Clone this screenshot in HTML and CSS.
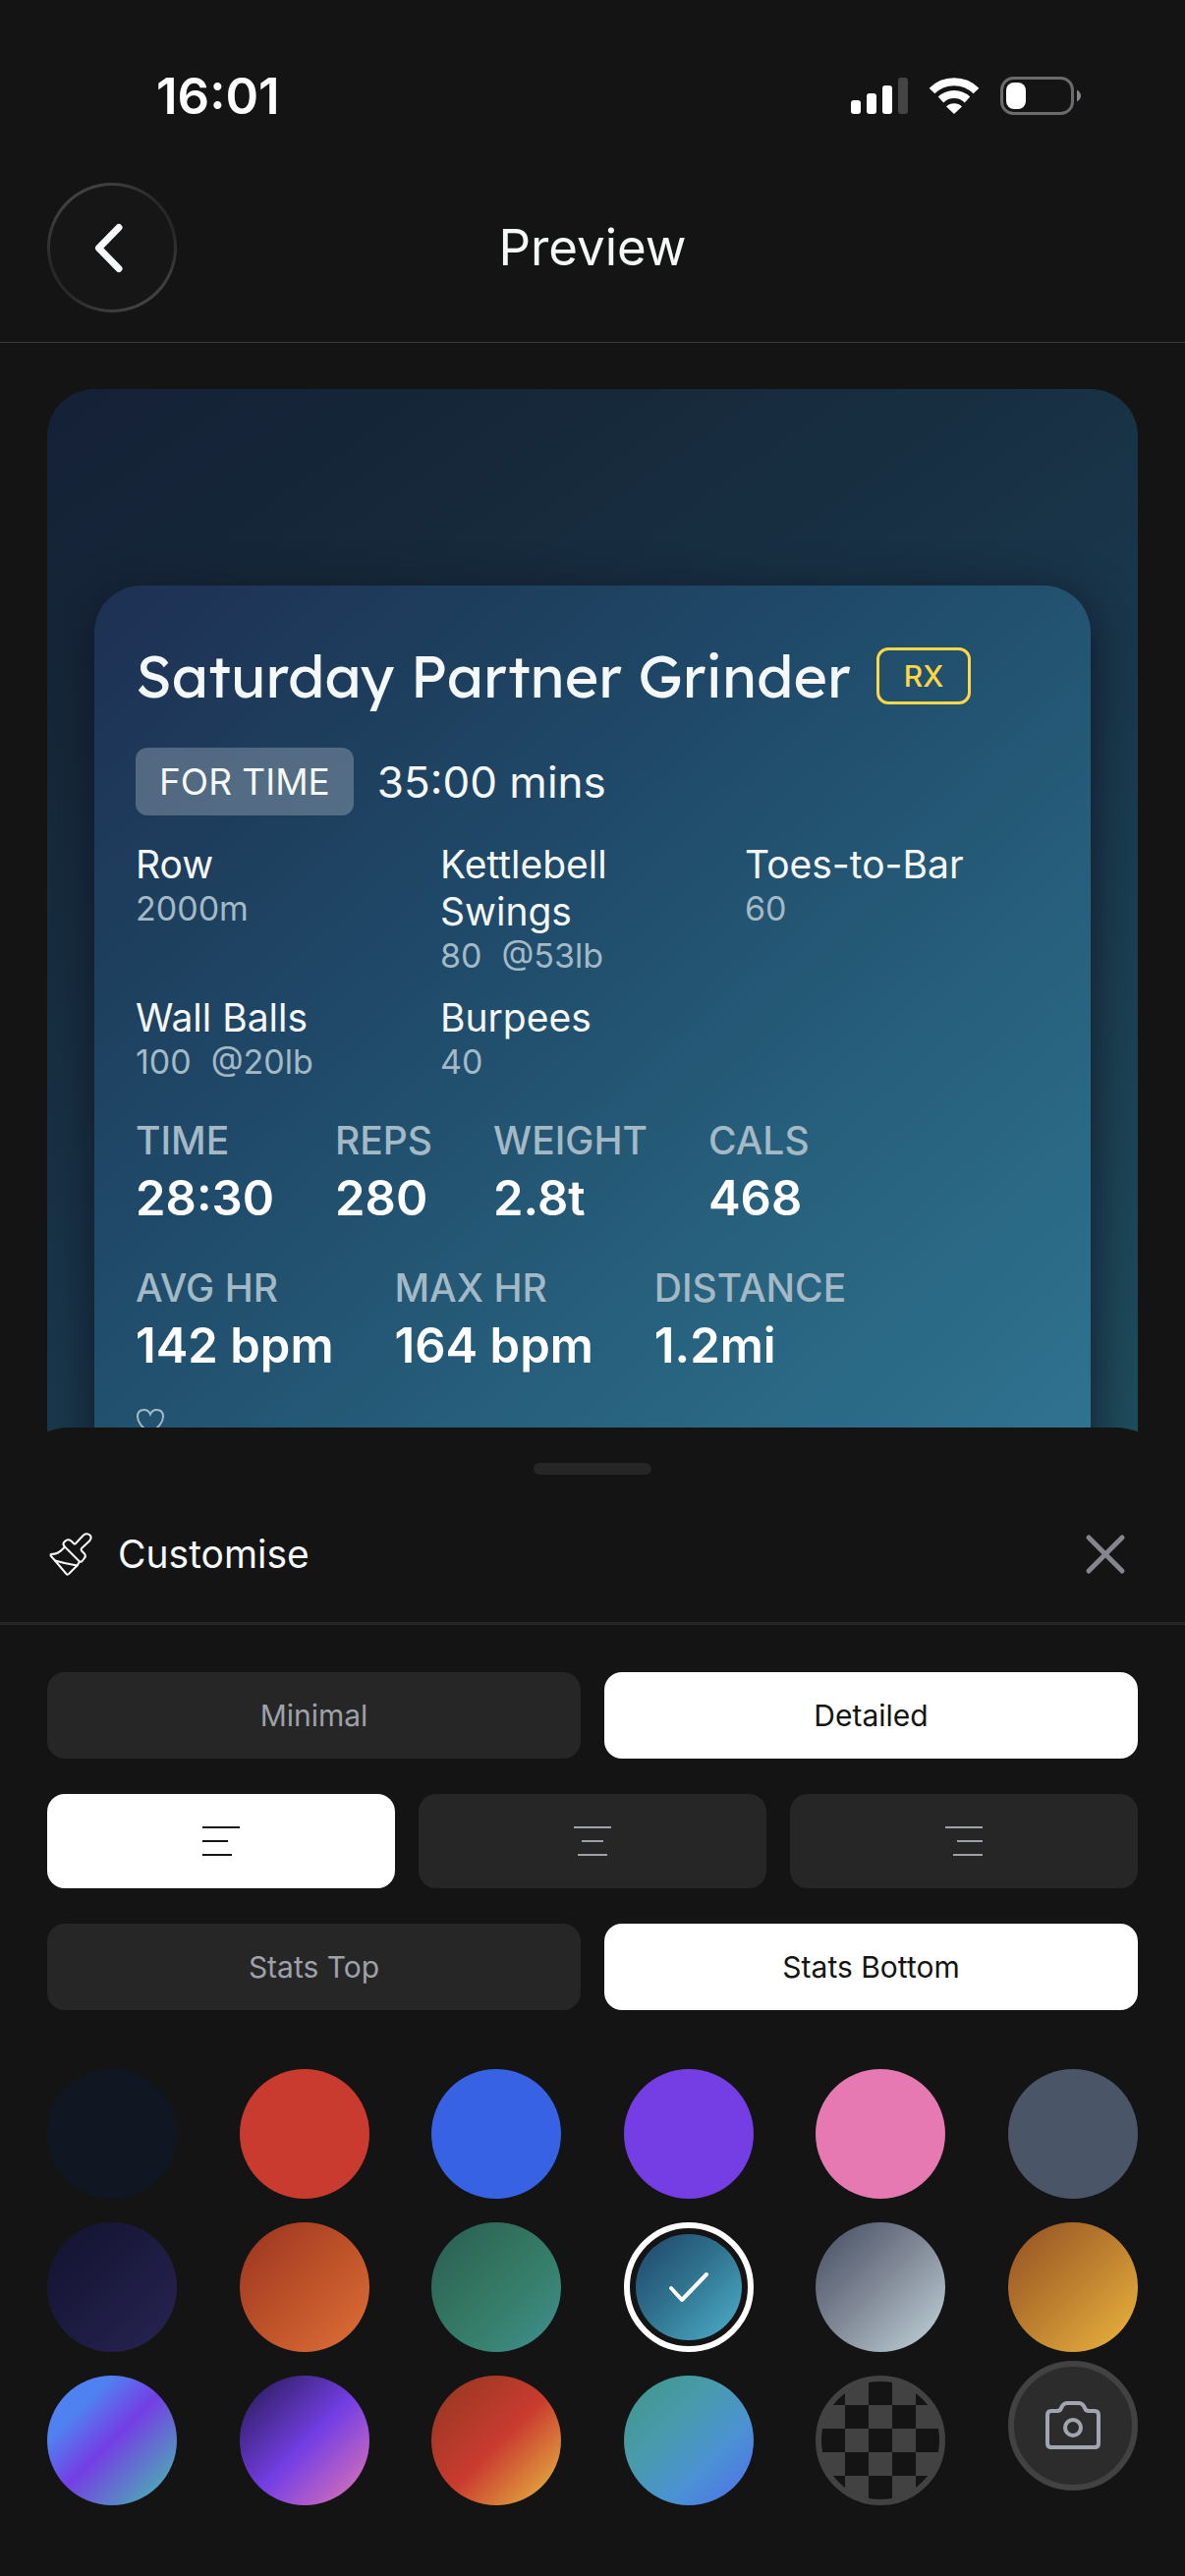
FILE: index.html
```html
<!DOCTYPE html>
<html lang="en">
<head>
    <meta charset="UTF-8">
    <meta name="viewport" content="width=device-width, initial-scale=1">
    <title>Preview</title>
    <link rel="stylesheet" href="styles.css">
</head>
<body>
    <div class="status-bar">
        <span class="clock">16:01</span>
        <div class="status-icons">
            <svg width="58" height="40" viewBox="0 0 58 40" fill="#fff">
                <rect x="0" y="24" width="10" height="14" rx="3"/>
                <rect x="16" y="17" width="10" height="21" rx="3"/>
                <rect x="32" y="9" width="10" height="29" rx="3"/>
                <rect x="48" y="1" width="10" height="37" rx="3" fill="#444"/>
            </svg>
            <svg width="52" height="40" viewBox="0 0 52 40" fill="none" stroke="#fff" stroke-width="8">
                <path d="M3.500 14.500 A32 32 0 0 1 48.500 14.500"/>
                <path d="M12.500 23.500 A19.500 19.500 0 0 1 39.500 23.500"/>
                <path d="M26 38 L18 30.500 A11.500 11.500 0 0 1 34 30.500 Z" fill="#fff" stroke="none"/>
            </svg>
            <svg width="83" height="40" viewBox="0 0 83 40">
                <rect x="1.500" y="1.500" width="72" height="36" rx="12" fill="none" stroke="#6b6b6b" stroke-width="3"/>
                <rect x="6" y="6" width="20" height="27" rx="8" fill="#fff"/>
                <path d="M78 13.500 Q82 16 82 19.500 Q82 23 78 25.500 Z" fill="#858590"/>
            </svg>
        </div>
    </div>

    <header class="header">
        <button class="back" aria-label="Back">
            <svg width="126" height="126" viewBox="0 0 126 126" fill="none" stroke="#f4f8f8" stroke-width="7" stroke-linecap="round" stroke-linejoin="round">
                <path d="M70 42.500 L49.500 63.500 L70 84.500"/>
            </svg>
        </button>
        <h1>Preview</h1>
    </header>

    <main class="preview">
        <div class="backdrop">
            <article class="card">
                <div class="title-row">
                    <h2>Saturday Partner Grinder</h2>
                    <span class="rx">RX</span>
                </div>
                <div class="type-row">
                    <span class="type">FOR TIME</span>
                    <span class="cap">35:00 mins</span>
                </div>
                <div class="moves">
                    <div class="move"><p>Row</p><span>2000m</span></div>
                    <div class="move"><p>Kettlebell Swings</p><span>80</span><span>@53lb</span></div>
                    <div class="move"><p>Toes-to-Bar</p><span>60</span></div>
                    <div class="move"><p>Wall Balls</p><span>100</span><span>@20lb</span></div>
                    <div class="move"><p>Burpees</p><span>40</span></div>
                </div>
                <dl class="stats">
                    <div><dt>TIME</dt><dd>28:30</dd></div>
                    <div><dt>REPS</dt><dd>280</dd></div>
                    <div><dt>WEIGHT</dt><dd>2.8t</dd></div>
                    <div><dt>CALS</dt><dd>468</dd></div>
                </dl>
                <dl class="stats">
                    <div><dt>AVG HR</dt><dd>142 bpm</dd></div>
                    <div><dt>MAX HR</dt><dd>164 bpm</dd></div>
                    <div><dt>DISTANCE</dt><dd>1.2mi</dd></div>
                </dl>
                <svg class="heart" width="30" height="30" viewBox="0 0 30 30" fill="none" stroke="#a3bac6" stroke-width="2">
                    <path d="M15 27 C5 20 2 15 2 10 C2 5 5 3 8.500 3 C11.500 3 14 5 15 7.500 C16 5 18.500 3 21.500 3 C25 3 28 5 28 10 C28 15 25 20 15 27 Z"/>
                </svg>
            </article>
        </div>
    </main>

    <section class="sheet">
        <div class="handle"></div>
        <div class="sheet-header">
            <svg width="48" height="48" viewBox="0 0 48 48" fill="none" stroke="#fafafa" stroke-width="2" stroke-linejoin="round" stroke-linecap="round">
                <path d="M18 16.500 L33 31.500 Q34.500 32 35.500 31 L37.500 28.500 Q40 26 38 23.500 L35 20.500 Q34 19 35 18 L43 10.500 Q46 7 43.500 4.500 Q40.500 2 37 4.500 L29 13 Q28 14 27 13 L24.500 10.500 Q21 8 18.500 10.500 L17 12 Q15.500 14 18 16.500"/>
                <path d="M18 16.500 Q14 21 11 22.500 Q8 24 4 24 Q3 25 4 26 L8 30.500 L19.500 44 Q21 45.500 22.500 43.500 L30.500 35.500 L33 31.500"/>
                <path d="M8 30.500 Q18 33.500 30.500 35.500"/>
            </svg>
            <h2>Customise</h2>
            <button class="close" aria-label="Close">
                <svg width="42" height="42" viewBox="0 0 42 42" stroke="#858590" stroke-width="5" stroke-linecap="round">
                    <path d="M4 4 L38 38 M38 4 L4 38"/>
                </svg>
            </button>
        </div>

        <div class="options">
            <div class="segment">
                <button>Minimal</button>
                <button class="active">Detailed</button>
            </div>
            <div class="segment align">
                <button class="active" aria-label="Align left">
                    <svg width="38" height="32" viewBox="0 0 38 32" stroke="currentColor" stroke-width="2">
                        <path d="M0 2 H38 M0 16 H26 M0 30 H30"/>
                    </svg>
                </button>
                <button aria-label="Align centre">
                    <svg width="38" height="32" viewBox="0 0 38 32" stroke="currentColor" stroke-width="2">
                        <path d="M0 2 H38 M8 16 H30 M4 30 H34"/>
                    </svg>
                </button>
                <button aria-label="Align right">
                    <svg width="38" height="32" viewBox="0 0 38 32" stroke="currentColor" stroke-width="2">
                        <path d="M0 2 H38 M12 16 H38 M8 30 H38"/>
                    </svg>
                </button>
            </div>
            <div class="segment">
                <button>Stats Top</button>
                <button class="active">Stats Bottom</button>
            </div>
        </div>

        <div class="swatches">
            <button class="swatch night" aria-label="Night"></button>
            <button class="swatch red" aria-label="Red"></button>
            <button class="swatch blue" aria-label="Blue"></button>
            <button class="swatch purple" aria-label="Purple"></button>
            <button class="swatch pink" aria-label="Pink"></button>
            <button class="swatch slate" aria-label="Slate"></button>
            <button class="swatch midnight" aria-label="Midnight"></button>
            <button class="swatch ember" aria-label="Ember"></button>
            <button class="swatch forest" aria-label="Forest"></button>
            <button class="swatch ocean selected" aria-label="Ocean">
                <svg width="42" height="32" viewBox="0 0 42 32" fill="none" stroke="#fff" stroke-width="4" stroke-linecap="round" stroke-linejoin="round">
                    <path d="M3 17 L14 29 L39 3"/>
                </svg>
            </button>
            <button class="swatch steel" aria-label="Steel"></button>
            <button class="swatch gold" aria-label="Gold"></button>
            <button class="swatch aurora" aria-label="Aurora"></button>
            <button class="swatch nebula" aria-label="Nebula"></button>
            <button class="swatch sunset" aria-label="Sunset"></button>
            <button class="swatch lagoon" aria-label="Lagoon"></button>
            <button class="swatch clear" aria-label="Transparent"></button>
            <button class="swatch photo" aria-label="Photo">
                <svg width="58" height="52" viewBox="0 0 58 52" fill="none" stroke="#a1a5b0" stroke-width="4" stroke-linejoin="round">
                    <path d="M7 11 H13 Q16 11 17 8 L18 6 Q20 3 23 3 H35 Q38 3 40 6 L41 8 Q42 11 45 11 H51 Q55 11 55 15 V44 Q55 48 51 48 H7 Q3 48 3 44 V15 Q3 11 7 11 Z"/>
                    <circle cx="29" cy="28" r="8"/>
                </svg>
            </button>
        </div>
    </section>
</body>
</html>
```
FILE: styles.css
```css
* {
    box-sizing: border-box;
}
body {
    margin: 0;
    min-height: 100vh;
    display: flex;
    flex-direction: column;
    background: #141414;
    color: #f4f8f8;
    font-family: Inter, sans-serif;
}
h1, h2, p, dl, dd {
    margin: 0;
    font-weight: 400;
}
button {
    border: none;
    padding: 0;
    font-family: inherit;
    color: inherit;
    background: none;
    cursor: pointer;
}
svg {
    display: block;
}

/* status bar */
.status-bar {
    display: flex;
    justify-content: space-between;
    align-items: center;
    padding: 66px 105px 0 159px;
}
.clock {
    color: #fff;
    font-size: 51px;
    line-height: 64px;
    font-weight: 600;
}
.status-icons {
    display: flex;
    align-items: center;
    gap: 21px;
}

/* header */
.header {
    display: grid;
    grid-template-columns: 132px 1fr 132px;
    align-items: center;
    padding: 56px 48px 30px;
    border-bottom: 1px solid #3c3c3c;
}
.header h1 {
    font-size: 51px;
    line-height: 64px;
    text-align: center;
}
.back {
    border-radius: 50%;
    background: linear-gradient(150deg, #505050, #282828 40%, #282828 60%, #505050);
    width: 132px;
    height: 132px;
    padding: 3px;
}
.back svg {
    border-radius: 50%;
    background: #161616;
}

/* preview card */
.preview {
    flex: 1 1 0;
    min-height: 0;
    padding: 47px 48px 0;
}
.backdrop {
    height: 1110px;
    padding: 200px 48px 0;
    border-radius: 48px 48px 0 0;
    background: linear-gradient(145deg, #142036, #162839 20%, #19354a 50%, #1f4e5e);
    overflow: hidden;
}
.card {
    height: 1100px;
    padding: 54px 42px;
    border-radius: 48px;
    background: linear-gradient(138deg, #1e3054, #1e3f5e 20%, #204a6a 35%, #255b78 55%, #2b6a86 75%, #34799a);
    box-shadow: 0 12px 48px rgba(16, 20, 36, 0.9);
}
.title-row {
    display: flex;
    align-items: center;
    gap: 26px;
}
.title-row h2 {
    font-family: Lexend, Lato, sans-serif;
    font-size: 59px;
    line-height: 76px;
}
.rx {
    padding: 0 25px;
    border: 3px solid #fdd744;
    border-radius: 12px;
    color: #fdd744;
    font-size: 30px;
    line-height: 52px;
    font-weight: 500;
}
.type-row {
    display: flex;
    align-items: center;
    gap: 24px;
    margin-top: 35px;
}
.type {
    padding: 0 24px;
    border-radius: 12px;
    background: rgba(255, 255, 255, 0.24);
    font-size: 37px;
    line-height: 69px;
}
.cap {
    font-size: 44px;
}
.moves {
    display: grid;
    grid-template-columns: repeat(3, 1fr);
    row-gap: 18px;
    margin-top: 26px;
}
.move p {
    font-size: 39px;
    line-height: 48px;
    padding-right: 60px;
}
.move span {
    display: inline-block;
    margin-right: 20px;
    color: #a3bac6;
    font-size: 34px;
    line-height: 42px;
}
.stats {
    display: flex;
    gap: 62px;
    margin-top: 32px;
}
.stats dt {
    color: #a3bac6;
    font-size: 39px;
    line-height: 54px;
    font-weight: 500;
}
.stats dd {
    color: #fff;
    font-size: 49px;
    line-height: 64px;
    font-weight: 600;
}
.heart {
    margin-top: 30px;
}

/* customise sheet */
.sheet {
    position: relative;
    padding: 36px 0 72px;
    border-radius: 72px 72px 0 0;
    background: #141414;
}
.handle {
    width: 120px;
    height: 12px;
    margin: 0 auto;
    border-radius: 6px;
    background: #262626;
}
.sheet-header {
    display: flex;
    align-items: center;
    gap: 24px;
    padding: 50px 60px 38px 48px;
    border-bottom: 3px solid #262626;
}
.sheet-header h2 {
    flex: 1;
    font-size: 39px;
    line-height: 62px;
}
.options {
    display: flex;
    flex-direction: column;
    gap: 36px;
    padding: 48px 48px 60px;
}
.segment {
    display: flex;
    gap: 24px;
}
.segment button {
    display: flex;
    align-items: center;
    justify-content: center;
    flex: 1;
    height: 88px;
    border-radius: 18px;
    background: #262626;
    color: #9ea1a9;
    font-size: 30px;
}
.segment.align button {
    height: 96px;
}
.segment .active {
    background: #fff;
    color: #141414;
}

/* colour swatches */
.swatches {
    display: grid;
    grid-template-columns: repeat(6, 132px);
    justify-content: space-between;
    row-gap: 24px;
    padding: 0 48px;
}
.swatch {
    display: flex;
    align-items: center;
    justify-content: center;
    height: 132px;
    border-radius: 50%;
}
.night { background: #111722; }
.red { background: #c93b2f; }
.blue { background: #3762e3; }
.purple { background: #743ee4; }
.pink { background: #e679b2; }
.slate { background: #4a5568; }
.midnight { background: linear-gradient(135deg, #121230, #1c1b40 50%, #292354); }
.ember { background: linear-gradient(135deg, #993320, #bd5229 50%, #e07038); }
.forest { background: linear-gradient(135deg, #295c54, #33745f 40%, #388372 70%, #41909a); }
.ocean { background: linear-gradient(135deg, #1f4468, #2f718d 45%, #4fb0cc); }
.steel { background: linear-gradient(135deg, #434c60, #838b99 50%, #c3d6dc); }
.gold { background: linear-gradient(135deg, #934f24, #bd812f 50%, #edb640); }
.aurora { background: linear-gradient(135deg, #4f82f0 25%, #743ee4 50%, #48b8b0 95%); }
.nebula { background: linear-gradient(135deg, #22194c, #743ee4 52%, #e679b2); }
.sunset { background: linear-gradient(135deg, #903820, #c93b2f 52%, #e8c044); }
.lagoon { background: linear-gradient(135deg, #3f9488, #489ba8 35%, #4b93d2 65%, #4f6eee); }
.selected {
    border: 6px solid #fff;
    padding: 6px;
    background-clip: content-box;
    background-origin: content-box;
}
.clear {
    border: 6px solid #424242;
    background: repeating-conic-gradient(#424242 0 25%, #141414 0 50%) 0 0 / 48px 48px;
}
/* the photo tile sits slightly higher than the colours */
.photo {
    margin-top: -15px;
    border: 6px solid #424242;
    background: #2c2c2c;
}
```
